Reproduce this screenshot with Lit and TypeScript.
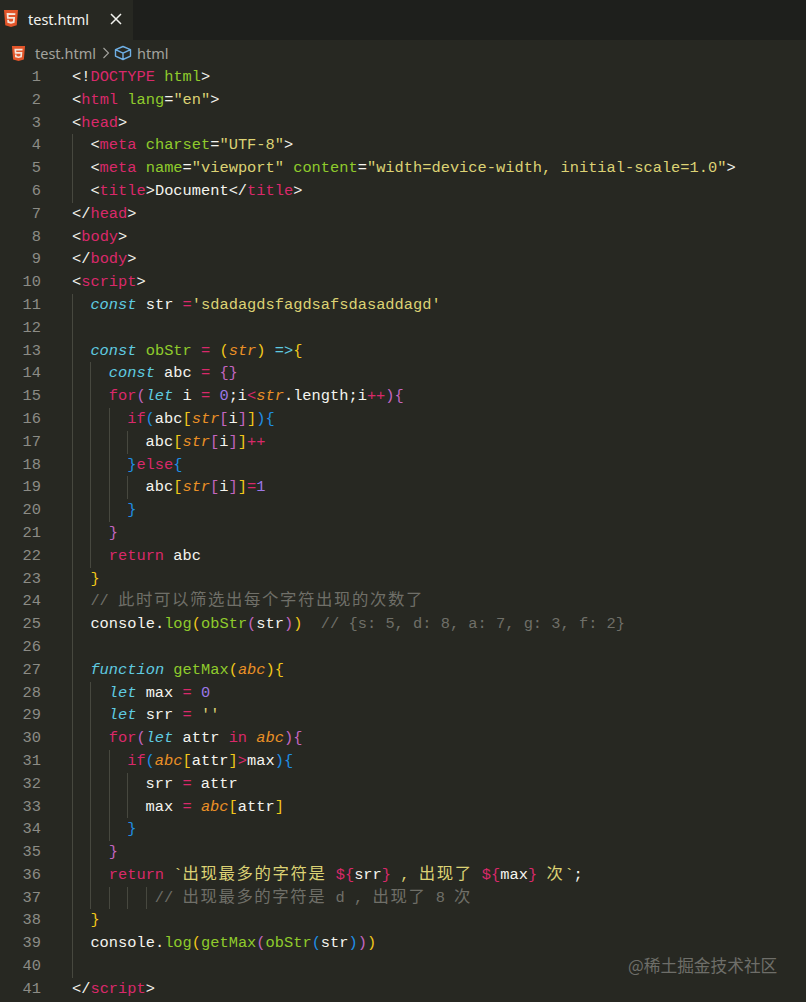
import { LitElement, html, css } from "lit";
import { customElement } from "lit/decorators.js";

type Line = { i: number; half?: boolean; t: string[] };
const L = (i: number, ...t: string[]): Line => ({ i, t });

const lines: Line[] = [
  L(0, "<!", "r~DOCTYPE", " ", "g~html", ">"),
  L(0, "<", "r~html", " ", "g~lang", '=', 'y~"en"', ">"),
  L(0, "<", "r~head", ">"),
  L(1, "<", "r~meta", " ", "g~charset", "=", 'y~"UTF-8"', ">"),
  L(1, "<", "r~meta", " ", "g~name", "=", 'y~"viewport"', " ", "g~content", "=", 'y~"width=device-width, initial-scale=1.0"', ">"),
  L(1, "<", "r~title", ">Document</", "r~title", ">"),
  L(0, "</", "r~head", ">"),
  L(0, "<", "r~body", ">"),
  L(0, "</", "r~body", ">"),
  L(0, "<", "r~script", ">"),
  L(1, "k~const", " str ", "r~=", "y~'sdadagdsfagdsafsdasaddagd'"),
  L(1),
  L(1, "k~const", " ", "g~obStr", " ", "r~=", " ", "b1~(", "o~str", "b1~)", " ", "a~=>", "b1~{"),
  L(2, "k~const", " abc ", "r~=", " ", "b2~{}"),
  L(2, "r~for", "b2~(", "k~let", " i ", "r~=", " ", "n~0", ";i", "r~<", "o~str", ".length;i", "r~++", "b2~)", "b2~{"),
  L(3, "r~if", "b3~(", "abc", "b1~[", "o~str", "b2~[", "i", "b2~]", "b1~]", "b3~)", "b3~{"),
  L(4, "abc", "b1~[", "o~str", "b2~[", "i", "b2~]", "b1~]", "r~++"),
  L(3, "b3~}", "r~else", "b3~{"),
  L(4, "abc", "b1~[", "o~str", "b2~[", "i", "b2~]", "b1~]", "r~=", "n~1"),
  L(3, "b3~}"),
  L(2, "b2~}"),
  L(2, "r~return", " abc"),
  L(1, "b1~}"),
  L(1, "c~// 此时可以筛选出每个字符出现的次数了"),
  L(1, "console.", "g~log", "b1~(", "g~obStr", "b2~(", "str", "b2~)", "b1~)", "  ", "c~// {s: 5, d: 8, a: 7, g: 3, f: 2}"),
  L(1),
  L(1, "k~function", " ", "g~getMax", "b1~(", "o~abc", "b1~)", "b1~{"),
  L(2, "k~let", " max ", "r~=", " ", "n~0"),
  L(2, "k~let", " srr ", "r~=", " ", "y~''"),
  L(2, "r~for", "b2~(", "k~let", " attr ", "r~in", " ", "o~abc", "b2~)", "b2~{"),
  L(3, "r~if", "b3~(", "o~abc", "b1~[", "attr", "b1~]", "r~>", "max", "b3~)", "b3~{"),
  L(4, "srr ", "r~=", " attr"),
  L(4, "max ", "r~=", " ", "o~abc", "b1~[", "attr", "b1~]"),
  L(3, "b3~}"),
  L(2, "b2~}"),
  L(2, "r~return", " ", "y~`出现最多的字符是 ", "r~${", "srr", "r~}", " ", "y~, 出现了 ", "r~${", "max", "r~}", " ", "y~次`", ";"),
  { i: 4, half: true, t: ["c~// 出现最多的字符是 d , 出现了 8 次"] },
  L(1, "b1~}"),
  L(1, "console.", "g~log", "b1~(", "g~getMax", "b2~(", "g~obStr", "b3~(", "str", "b3~)", "b2~)", "b1~)"),
  L(1),
  L(0, "</", "r~script", ">"),
];

const shield = (cls: string) => html`<svg class=${cls} viewBox="0 0 24 24" preserveAspectRatio="none" aria-hidden="true">
  <path fill="#e2552a" d="M1.5 0h21l-1.91 21.563L11.977 24l-8.564-2.438L1.5 0z" />
  <path fill="#f4e6dc" d="M8.531 9.75l-.232-2.718 10.059.003.23-2.622L5.412 4.41l.698 8.01h9.126l-.326 3.426-2.91.804-2.955-.81-.188-2.11H6.248l.33 4.171L12 19.351l5.379-1.443.744-8.157H8.531z" />
</svg>`;

@customElement("app-root")
export class AppRoot extends LitElement {
  static styles = css`
    :host {
      display: block;
      position: relative;
      width: 806px;
      height: 1002px;
      overflow: hidden;
      background: #272822;
      color: #f4f4ee;
    }
    .tabs {
      height: 40px;
      background: #1e1f1c;
      display: flex;
    }
    .tab {
      width: 133px;
      box-sizing: border-box;
      background: #272822;
      display: flex;
      align-items: center;
      padding-left: 3px;
      font: 14.5px "Noto Sans", sans-serif;
      color: #f2f2ee;
    }
    .tab-icon { width: 16px; height: 17px; flex: none; margin-top: -3px; }
    .tab-name { margin-left: 9px; margin-top: -2px; }
    .close { width: 12px; height: 12px; margin-left: 21px; flex: none; margin-top: -3px; }
    .crumbs {
      height: 26px;
      display: flex;
      align-items: center;
      padding-left: 11px;
      font: 14.5px "Noto Sans", sans-serif;
      color: #a3a39e;
      box-sizing: border-box;
    }
    .crumb-icon { width: 15px; height: 15px; flex: none; }
    .crumb-name { margin-left: 9px; }
    .chev { width: 8px; height: 12px; margin: 0 4px 0 6px; flex: none; }
    .cube { width: 18px; height: 18px; margin-right: 5px; flex: none; }
    .code {
      font: 15.37px / 22.8px "Liberation Mono", "Noto Sans CJK SC", monospace;
    }
    .line { display: flex; height: 22.8px; white-space: pre; }
    .num { width: 41px; text-align: right; color: #8c8c86; flex: none; margin-right: 31px; }
    .ind {
      flex: none;
      width: 18.4px;
      box-sizing: border-box;
      border-left: 1px solid #47483f;
    }
    .ind.half { width: 9.2px; }
    .cjk { font-size: 16.4px; letter-spacing: 1.6px; line-height: 1; }
    .r { color: #d9296a; }
    .g { color: #8fcb2c; }
    .y { color: #dcd274; }
    .k { color: #5fcbe0; font-style: italic; }
    .o { color: #ea9026; font-style: italic; }
    .a { color: #5fcbe0; }
    .n { color: #9d78e8; }
    .c { color: #6f6f68; }
    .b1 { color: #f2c81a; }
    .b2 { color: #c466c0; }
    .b3 { color: #1f8fe6; }
    .mark {
      position: absolute;
      left: 628px;
      top: 954px;
      font: 16.7px / 22px "Noto Sans CJK SC", "Noto Sans", sans-serif;
      color: #6e6e69;
    }
  `;

  private text(s: string) {
    return s
      .split(/([\u4e00-\u9fff]+)/)
      .map((part, i) => (i % 2 ? html`<span class="cjk">${part}</span>` : part));
  }

  private token(s: string) {
    const p = s.indexOf("~");
    if (p > 0 && p <= 2) return html`<span class=${s.slice(0, p)}>${this.text(s.slice(p + 1))}</span>`;
    return html`<span>${s}</span>`;
  }

  render() {
    return html`
      <div class="tabs">
        <div class="tab">
          ${shield("tab-icon")}
          <span class="tab-name">test.html</span>
          <svg class="close" viewBox="0 0 12 12" aria-hidden="true">
            <path d="M1 1l10 10M11 1L1 11" stroke="#f2f2ee" stroke-width="1.5" fill="none" />
          </svg>
        </div>
      </div>
      <div class="crumbs">
        ${shield("crumb-icon")}
        <span class="crumb-name">test.html</span>
        <svg class="chev" viewBox="0 0 8 12" aria-hidden="true">
          <path d="M1.5 1l5 5-5 5" stroke="#a3a39e" stroke-width="1.1" fill="none" />
        </svg>
        <svg class="cube" viewBox="0 0 18 18" aria-hidden="true">
          <path d="M9 2.5l7.5 3.2v6.4L9 15.5l-7.5-3.4V5.7z M1.5 5.7L9 9.2l7.5-3.5 M9 9.2v6.3" stroke="#6fb0e6" stroke-width="1.4" stroke-linejoin="round" fill="none" />
        </svg>
        <span>html</span>
      </div>
      <div class="code">
        ${lines.map(
          (l, idx) => html`<div class="line"><span class="num">${idx + 1}</span>${Array.from(
              { length: l.i },
              () => html`<span class="ind"></span>`
            )}${l.half ? html`<span class="ind half"></span>` : ""}<span>${l.t.map((s) => this.token(s))}</span></div>`
        )}
      </div>
      <div class="mark">@稀土掘金技术社区</div>
    `;
  }
}
